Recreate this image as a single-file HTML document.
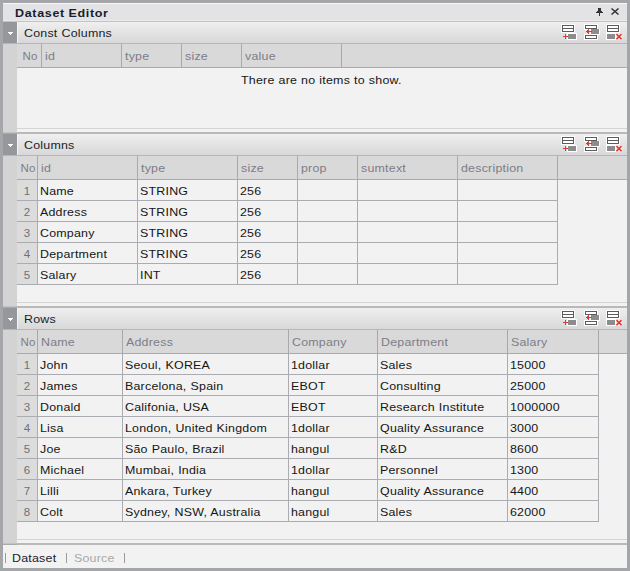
<!DOCTYPE html>
<html><head><meta charset="utf-8"><title>Dataset Editor</title><style>
*{margin:0;padding:0;box-sizing:border-box}
html,body{width:630px;height:571px;overflow:hidden;background:#a4a6a9;font-family:"Liberation Sans", sans-serif;font-size:11.5px}
.a{position:absolute}
.t{position:absolute;white-space:nowrap;line-height:14px;letter-spacing:0.2px;word-spacing:0.3px;transform-origin:0 0;transform:scaleX(1.08)}
.hd{color:#7d7d88}
.dt{color:#161616}
.nm{color:#707078}
</style></head>
<body>
<div class="a" style="left:3px;top:3px;width:624px;height:565px;background:#f2f2f2;"></div><div class="a" style="left:3px;top:3px;width:624px;height:18px;background:#e3e3e5;"></div><div class="a" style="left:3px;top:3px;width:624px;height:1px;background:#f7f7f8;"></div><div class="a" style="left:3px;top:20px;width:624px;height:1px;background:#eaeaec;"></div><div class="a" style="left:3px;top:21px;width:624px;height:1px;background:#c4c4c6;"></div><div class="t dt" style="left:15px;top:6px;font-weight:bold;letter-spacing:0.6px;word-spacing:-0.5px;transform:scaleX(1.09);transform-origin:0 0;color:#1c1c2a">Dataset Editor</div><svg class="a" style="left:594px;top:6px" width="12" height="12" viewBox="0 0 12 12" shape-rendering="crispEdges">
<rect x="4" y="2" width="3" height="4" fill="#333"/>
<rect x="3" y="5" width="5" height="1" fill="#333"/>
<rect x="2" y="6" width="7" height="1" fill="#333"/>
<rect x="5" y="7" width="1" height="3" fill="#333"/>
</svg><svg class="a" style="left:609px;top:6px" width="12" height="12" viewBox="0 0 12 12">
<path d="M2.5 2.5 L9.5 8.5 M9.5 2.5 L2.5 8.5" stroke="#333" stroke-width="1.6" fill="none"/>
</svg><div class="a" style="left:3px;top:22px;width:624px;height:21px;background:linear-gradient(#efefef,#d8d8d8);"></div><div class="a" style="left:3px;top:22px;width:14px;height:21px;background:#95979b;"></div><div class="a" style="left:17px;top:22px;width:1px;height:21px;background:#f4f4f4;"></div><div class="a" style="left:3px;top:43px;width:624px;height:1px;background:#b6b6b8;"></div><svg class="a" style="left:8px;top:32px" width="5" height="3" viewBox="0 0 5 3" shape-rendering="crispEdges">
<rect x="0" y="0" width="5" height="1" fill="#fff"/><rect x="1" y="1" width="3" height="1" fill="#fff"/><rect x="2" y="2" width="1" height="1" fill="#fff"/></svg><div class="t dt" style="left:24px;top:26px;color:#1c1c2a">Const Columns</div><svg class="a" style="left:560px;top:23px" width="66" height="20" viewBox="0 0 66 20" shape-rendering="crispEdges">
<!-- icon1 -->
<rect x="1" y="1" width="14" height="9" fill="#fff" fill-opacity="0.8"/>
<rect x="2" y="2" width="12" height="7" fill="#5c5c5c"/>
<rect x="3" y="3" width="10" height="2" fill="#fff"/>
<rect x="3" y="6" width="10" height="2" fill="#fff"/>
<rect x="7" y="10" width="10" height="7" fill="#fff"/>
<rect x="8" y="11" width="8" height="5" fill="#8c8c8c"/>
<rect x="3" y="13" width="5" height="1" fill="#e53a30"/>
<rect x="5" y="11" width="1" height="5" fill="#e53a30"/>
<!-- icon2 -->
<rect x="24" y="1" width="14" height="6" fill="#fff"/>
<rect x="25" y="2" width="12" height="4" fill="#5c5c5c"/>
<rect x="26" y="3" width="10" height="2" fill="#fff"/>
<rect x="30" y="6" width="10" height="6" fill="#fff"/>
<rect x="31" y="6" width="8" height="5" fill="#8c8c8c"/>
<rect x="26" y="8" width="6" height="1" fill="#e53a30"/>
<rect x="27" y="7" width="1" height="3" fill="#e53a30"/>
<rect x="28" y="6" width="1" height="5" fill="#e53a30"/>
<rect x="24" y="11" width="14" height="6" fill="#fff"/>
<rect x="25" y="12" width="12" height="4" fill="#5c5c5c"/>
<rect x="26" y="13" width="10" height="2" fill="#fff"/>
<!-- icon3 -->
<rect x="46" y="1" width="14" height="9" fill="#fff"/>
<rect x="47" y="2" width="12" height="7" fill="#5c5c5c"/>
<rect x="48" y="3" width="10" height="2" fill="#fff"/>
<rect x="48" y="6" width="10" height="2" fill="#fff"/>
<rect x="46" y="10" width="10" height="7" fill="#fff"/>
<rect x="47" y="11" width="8" height="5" fill="#8c8c8c"/>
</svg>
<svg class="a" style="left:614px;top:33px" width="10" height="8" viewBox="0 0 10 8">
<path d="M2.5 1.2 L7.5 6.2 M7.5 1.2 L2.5 6.2" stroke="#fff" stroke-width="3.2" fill="none"/>
<path d="M2.5 1.2 L7.5 6.2 M7.5 1.2 L2.5 6.2" stroke="#e53a30" stroke-width="1.7" fill="none"/>
</svg><div class="a" style="left:3px;top:44px;width:14px;height:84px;background:#d3d3d3;"></div><div class="a" style="left:17px;top:44px;width:610px;height:23px;background:#d9d9d9;"></div><div class="a" style="left:17px;top:67px;width:610px;height:1px;background:#a8a9ae;"></div><div class="a" style="left:41px;top:44px;width:1px;height:23px;background:#a8a9ae;"></div><div class="t hd" style="left:30.0px;top:49px;transform:translateX(-50%)">No</div><div class="a" style="left:121px;top:44px;width:1px;height:23px;background:#a8a9ae;"></div><div class="t hd" style="left:45px;top:49px;">id</div><div class="a" style="left:181px;top:44px;width:1px;height:23px;background:#a8a9ae;"></div><div class="t hd" style="left:125px;top:49px;">type</div><div class="a" style="left:241px;top:44px;width:1px;height:23px;background:#a8a9ae;"></div><div class="t hd" style="left:185px;top:49px;">size</div><div class="a" style="left:341px;top:44px;width:1px;height:23px;background:#a8a9ae;"></div><div class="t hd" style="left:245px;top:49px;">value</div><div class="t dt" style="left:241px;top:73px;">There are no items to show.</div><div class="a" style="left:3px;top:128px;width:14px;height:4px;background:#d3d3d3;"></div><div class="a" style="left:17px;top:128px;width:610px;height:1px;background:#d4d4d4;"></div><div class="a" style="left:17px;top:129px;width:610px;height:3px;background:#f2f2f2;"></div><div class="a" style="left:17px;top:132px;width:610px;height:2px;background:#b9b9b9;"></div><div class="a" style="left:3px;top:132px;width:14px;height:1px;background:#c2c2c2;"></div><div class="a" style="left:3px;top:133px;width:14px;height:1px;background:#aaaaac;"></div><div class="a" style="left:3px;top:134px;width:624px;height:21px;background:linear-gradient(#efefef,#d8d8d8);"></div><div class="a" style="left:3px;top:134px;width:14px;height:21px;background:#95979b;"></div><div class="a" style="left:17px;top:134px;width:1px;height:21px;background:#f4f4f4;"></div><div class="a" style="left:3px;top:155px;width:624px;height:1px;background:#b6b6b8;"></div><svg class="a" style="left:8px;top:144px" width="5" height="3" viewBox="0 0 5 3" shape-rendering="crispEdges">
<rect x="0" y="0" width="5" height="1" fill="#fff"/><rect x="1" y="1" width="3" height="1" fill="#fff"/><rect x="2" y="2" width="1" height="1" fill="#fff"/></svg><div class="t dt" style="left:24px;top:138px;color:#1c1c2a">Columns</div><svg class="a" style="left:560px;top:135px" width="66" height="20" viewBox="0 0 66 20" shape-rendering="crispEdges">
<!-- icon1 -->
<rect x="1" y="1" width="14" height="9" fill="#fff" fill-opacity="0.8"/>
<rect x="2" y="2" width="12" height="7" fill="#5c5c5c"/>
<rect x="3" y="3" width="10" height="2" fill="#fff"/>
<rect x="3" y="6" width="10" height="2" fill="#fff"/>
<rect x="7" y="10" width="10" height="7" fill="#fff"/>
<rect x="8" y="11" width="8" height="5" fill="#8c8c8c"/>
<rect x="3" y="13" width="5" height="1" fill="#e53a30"/>
<rect x="5" y="11" width="1" height="5" fill="#e53a30"/>
<!-- icon2 -->
<rect x="24" y="1" width="14" height="6" fill="#fff"/>
<rect x="25" y="2" width="12" height="4" fill="#5c5c5c"/>
<rect x="26" y="3" width="10" height="2" fill="#fff"/>
<rect x="30" y="6" width="10" height="6" fill="#fff"/>
<rect x="31" y="6" width="8" height="5" fill="#8c8c8c"/>
<rect x="26" y="8" width="6" height="1" fill="#e53a30"/>
<rect x="27" y="7" width="1" height="3" fill="#e53a30"/>
<rect x="28" y="6" width="1" height="5" fill="#e53a30"/>
<rect x="24" y="11" width="14" height="6" fill="#fff"/>
<rect x="25" y="12" width="12" height="4" fill="#5c5c5c"/>
<rect x="26" y="13" width="10" height="2" fill="#fff"/>
<!-- icon3 -->
<rect x="46" y="1" width="14" height="9" fill="#fff"/>
<rect x="47" y="2" width="12" height="7" fill="#5c5c5c"/>
<rect x="48" y="3" width="10" height="2" fill="#fff"/>
<rect x="48" y="6" width="10" height="2" fill="#fff"/>
<rect x="46" y="10" width="10" height="7" fill="#fff"/>
<rect x="47" y="11" width="8" height="5" fill="#8c8c8c"/>
</svg>
<svg class="a" style="left:614px;top:145px" width="10" height="8" viewBox="0 0 10 8">
<path d="M2.5 1.2 L7.5 6.2 M7.5 1.2 L2.5 6.2" stroke="#fff" stroke-width="3.2" fill="none"/>
<path d="M2.5 1.2 L7.5 6.2 M7.5 1.2 L2.5 6.2" stroke="#e53a30" stroke-width="1.7" fill="none"/>
</svg><div class="a" style="left:3px;top:156px;width:14px;height:146px;background:#d3d3d3;"></div><div class="a" style="left:17px;top:156px;width:610px;height:23px;background:#d9d9d9;"></div><div class="a" style="left:17px;top:179px;width:610px;height:1px;background:#a8a9ae;"></div><div class="a" style="left:37px;top:156px;width:1px;height:23px;background:#a8a9ae;"></div><div class="t hd" style="left:28.0px;top:161px;transform:translateX(-50%)">No</div><div class="a" style="left:137px;top:156px;width:1px;height:23px;background:#a8a9ae;"></div><div class="t hd" style="left:41px;top:161px;">id</div><div class="a" style="left:237px;top:156px;width:1px;height:23px;background:#a8a9ae;"></div><div class="t hd" style="left:141px;top:161px;">type</div><div class="a" style="left:297px;top:156px;width:1px;height:23px;background:#a8a9ae;"></div><div class="t hd" style="left:241px;top:161px;">size</div><div class="a" style="left:357px;top:156px;width:1px;height:23px;background:#a8a9ae;"></div><div class="t hd" style="left:301px;top:161px;">prop</div><div class="a" style="left:457px;top:156px;width:1px;height:23px;background:#a8a9ae;"></div><div class="t hd" style="left:361px;top:161px;">sumtext</div><div class="a" style="left:557px;top:156px;width:1px;height:23px;background:#a8a9ae;"></div><div class="t hd" style="left:461px;top:161px;">description</div><div class="a" style="left:17px;top:180px;width:20px;height:20px;background:#dcdcdc;"></div><div class="a" style="left:38px;top:180px;width:519px;height:20px;background:#f2f2f2;"></div><div class="a" style="left:17px;top:200px;width:541px;height:1px;background:#abacb1;"></div><div class="a" style="left:37px;top:180px;width:1px;height:20px;background:#abacb1;"></div><div class="a" style="left:137px;top:180px;width:1px;height:20px;background:#abacb1;"></div><div class="a" style="left:237px;top:180px;width:1px;height:20px;background:#abacb1;"></div><div class="a" style="left:297px;top:180px;width:1px;height:20px;background:#abacb1;"></div><div class="a" style="left:357px;top:180px;width:1px;height:20px;background:#abacb1;"></div><div class="a" style="left:457px;top:180px;width:1px;height:20px;background:#abacb1;"></div><div class="a" style="left:557px;top:180px;width:1px;height:20px;background:#abacb1;"></div><div class="t nm" style="left:27.0px;top:184px;transform:translateX(-50%)">1</div><div class="t dt" style="left:40px;top:184px;">Name</div><div class="t dt" style="left:140px;top:184px;">STRING</div><div class="t dt" style="left:240px;top:184px;">256</div><div class="t dt" style="left:300px;top:184px;"></div><div class="t dt" style="left:360px;top:184px;"></div><div class="t dt" style="left:460px;top:184px;"></div><div class="a" style="left:17px;top:201px;width:20px;height:20px;background:#dcdcdc;"></div><div class="a" style="left:38px;top:201px;width:519px;height:20px;background:#f2f2f2;"></div><div class="a" style="left:17px;top:221px;width:541px;height:1px;background:#abacb1;"></div><div class="a" style="left:37px;top:201px;width:1px;height:20px;background:#abacb1;"></div><div class="a" style="left:137px;top:201px;width:1px;height:20px;background:#abacb1;"></div><div class="a" style="left:237px;top:201px;width:1px;height:20px;background:#abacb1;"></div><div class="a" style="left:297px;top:201px;width:1px;height:20px;background:#abacb1;"></div><div class="a" style="left:357px;top:201px;width:1px;height:20px;background:#abacb1;"></div><div class="a" style="left:457px;top:201px;width:1px;height:20px;background:#abacb1;"></div><div class="a" style="left:557px;top:201px;width:1px;height:20px;background:#abacb1;"></div><div class="t nm" style="left:27.0px;top:205px;transform:translateX(-50%)">2</div><div class="t dt" style="left:40px;top:205px;">Address</div><div class="t dt" style="left:140px;top:205px;">STRING</div><div class="t dt" style="left:240px;top:205px;">256</div><div class="t dt" style="left:300px;top:205px;"></div><div class="t dt" style="left:360px;top:205px;"></div><div class="t dt" style="left:460px;top:205px;"></div><div class="a" style="left:17px;top:222px;width:20px;height:20px;background:#dcdcdc;"></div><div class="a" style="left:38px;top:222px;width:519px;height:20px;background:#f2f2f2;"></div><div class="a" style="left:17px;top:242px;width:541px;height:1px;background:#abacb1;"></div><div class="a" style="left:37px;top:222px;width:1px;height:20px;background:#abacb1;"></div><div class="a" style="left:137px;top:222px;width:1px;height:20px;background:#abacb1;"></div><div class="a" style="left:237px;top:222px;width:1px;height:20px;background:#abacb1;"></div><div class="a" style="left:297px;top:222px;width:1px;height:20px;background:#abacb1;"></div><div class="a" style="left:357px;top:222px;width:1px;height:20px;background:#abacb1;"></div><div class="a" style="left:457px;top:222px;width:1px;height:20px;background:#abacb1;"></div><div class="a" style="left:557px;top:222px;width:1px;height:20px;background:#abacb1;"></div><div class="t nm" style="left:27.0px;top:226px;transform:translateX(-50%)">3</div><div class="t dt" style="left:40px;top:226px;">Company</div><div class="t dt" style="left:140px;top:226px;">STRING</div><div class="t dt" style="left:240px;top:226px;">256</div><div class="t dt" style="left:300px;top:226px;"></div><div class="t dt" style="left:360px;top:226px;"></div><div class="t dt" style="left:460px;top:226px;"></div><div class="a" style="left:17px;top:243px;width:20px;height:20px;background:#dcdcdc;"></div><div class="a" style="left:38px;top:243px;width:519px;height:20px;background:#f2f2f2;"></div><div class="a" style="left:17px;top:263px;width:541px;height:1px;background:#abacb1;"></div><div class="a" style="left:37px;top:243px;width:1px;height:20px;background:#abacb1;"></div><div class="a" style="left:137px;top:243px;width:1px;height:20px;background:#abacb1;"></div><div class="a" style="left:237px;top:243px;width:1px;height:20px;background:#abacb1;"></div><div class="a" style="left:297px;top:243px;width:1px;height:20px;background:#abacb1;"></div><div class="a" style="left:357px;top:243px;width:1px;height:20px;background:#abacb1;"></div><div class="a" style="left:457px;top:243px;width:1px;height:20px;background:#abacb1;"></div><div class="a" style="left:557px;top:243px;width:1px;height:20px;background:#abacb1;"></div><div class="t nm" style="left:27.0px;top:247px;transform:translateX(-50%)">4</div><div class="t dt" style="left:40px;top:247px;">Department</div><div class="t dt" style="left:140px;top:247px;">STRING</div><div class="t dt" style="left:240px;top:247px;">256</div><div class="t dt" style="left:300px;top:247px;"></div><div class="t dt" style="left:360px;top:247px;"></div><div class="t dt" style="left:460px;top:247px;"></div><div class="a" style="left:17px;top:264px;width:20px;height:20px;background:#dcdcdc;"></div><div class="a" style="left:38px;top:264px;width:519px;height:20px;background:#f2f2f2;"></div><div class="a" style="left:17px;top:284px;width:541px;height:1px;background:#abacb1;"></div><div class="a" style="left:37px;top:264px;width:1px;height:20px;background:#abacb1;"></div><div class="a" style="left:137px;top:264px;width:1px;height:20px;background:#abacb1;"></div><div class="a" style="left:237px;top:264px;width:1px;height:20px;background:#abacb1;"></div><div class="a" style="left:297px;top:264px;width:1px;height:20px;background:#abacb1;"></div><div class="a" style="left:357px;top:264px;width:1px;height:20px;background:#abacb1;"></div><div class="a" style="left:457px;top:264px;width:1px;height:20px;background:#abacb1;"></div><div class="a" style="left:557px;top:264px;width:1px;height:20px;background:#abacb1;"></div><div class="t nm" style="left:27.0px;top:268px;transform:translateX(-50%)">5</div><div class="t dt" style="left:40px;top:268px;">Salary</div><div class="t dt" style="left:140px;top:268px;">INT</div><div class="t dt" style="left:240px;top:268px;">256</div><div class="t dt" style="left:300px;top:268px;"></div><div class="t dt" style="left:360px;top:268px;"></div><div class="t dt" style="left:460px;top:268px;"></div><div class="a" style="left:3px;top:302px;width:14px;height:4px;background:#d3d3d3;"></div><div class="a" style="left:17px;top:302px;width:610px;height:1px;background:#d4d4d4;"></div><div class="a" style="left:17px;top:303px;width:610px;height:3px;background:#f2f2f2;"></div><div class="a" style="left:17px;top:306px;width:610px;height:2px;background:#b9b9b9;"></div><div class="a" style="left:3px;top:306px;width:14px;height:1px;background:#c2c2c2;"></div><div class="a" style="left:3px;top:307px;width:14px;height:1px;background:#aaaaac;"></div><div class="a" style="left:3px;top:308px;width:624px;height:21px;background:linear-gradient(#efefef,#d8d8d8);"></div><div class="a" style="left:3px;top:308px;width:14px;height:21px;background:#95979b;"></div><div class="a" style="left:17px;top:308px;width:1px;height:21px;background:#f4f4f4;"></div><div class="a" style="left:3px;top:329px;width:624px;height:1px;background:#b6b6b8;"></div><svg class="a" style="left:8px;top:318px" width="5" height="3" viewBox="0 0 5 3" shape-rendering="crispEdges">
<rect x="0" y="0" width="5" height="1" fill="#fff"/><rect x="1" y="1" width="3" height="1" fill="#fff"/><rect x="2" y="2" width="1" height="1" fill="#fff"/></svg><div class="t dt" style="left:24px;top:312px;color:#1c1c2a">Rows</div><svg class="a" style="left:560px;top:309px" width="66" height="20" viewBox="0 0 66 20" shape-rendering="crispEdges">
<!-- icon1 -->
<rect x="1" y="1" width="14" height="9" fill="#fff" fill-opacity="0.8"/>
<rect x="2" y="2" width="12" height="7" fill="#5c5c5c"/>
<rect x="3" y="3" width="10" height="2" fill="#fff"/>
<rect x="3" y="6" width="10" height="2" fill="#fff"/>
<rect x="7" y="10" width="10" height="7" fill="#fff"/>
<rect x="8" y="11" width="8" height="5" fill="#8c8c8c"/>
<rect x="3" y="13" width="5" height="1" fill="#e53a30"/>
<rect x="5" y="11" width="1" height="5" fill="#e53a30"/>
<!-- icon2 -->
<rect x="24" y="1" width="14" height="6" fill="#fff"/>
<rect x="25" y="2" width="12" height="4" fill="#5c5c5c"/>
<rect x="26" y="3" width="10" height="2" fill="#fff"/>
<rect x="30" y="6" width="10" height="6" fill="#fff"/>
<rect x="31" y="6" width="8" height="5" fill="#8c8c8c"/>
<rect x="26" y="8" width="6" height="1" fill="#e53a30"/>
<rect x="27" y="7" width="1" height="3" fill="#e53a30"/>
<rect x="28" y="6" width="1" height="5" fill="#e53a30"/>
<rect x="24" y="11" width="14" height="6" fill="#fff"/>
<rect x="25" y="12" width="12" height="4" fill="#5c5c5c"/>
<rect x="26" y="13" width="10" height="2" fill="#fff"/>
<!-- icon3 -->
<rect x="46" y="1" width="14" height="9" fill="#fff"/>
<rect x="47" y="2" width="12" height="7" fill="#5c5c5c"/>
<rect x="48" y="3" width="10" height="2" fill="#fff"/>
<rect x="48" y="6" width="10" height="2" fill="#fff"/>
<rect x="46" y="10" width="10" height="7" fill="#fff"/>
<rect x="47" y="11" width="8" height="5" fill="#8c8c8c"/>
</svg>
<svg class="a" style="left:614px;top:319px" width="10" height="8" viewBox="0 0 10 8">
<path d="M2.5 1.2 L7.5 6.2 M7.5 1.2 L2.5 6.2" stroke="#fff" stroke-width="3.2" fill="none"/>
<path d="M2.5 1.2 L7.5 6.2 M7.5 1.2 L2.5 6.2" stroke="#e53a30" stroke-width="1.7" fill="none"/>
</svg><div class="a" style="left:3px;top:330px;width:14px;height:209px;background:#d3d3d3;"></div><div class="a" style="left:17px;top:330px;width:610px;height:23px;background:#d9d9d9;"></div><div class="a" style="left:17px;top:353px;width:610px;height:1px;background:#a8a9ae;"></div><div class="a" style="left:37px;top:330px;width:1px;height:23px;background:#a8a9ae;"></div><div class="t hd" style="left:28.0px;top:335px;transform:translateX(-50%)">No</div><div class="a" style="left:122px;top:330px;width:1px;height:23px;background:#a8a9ae;"></div><div class="t hd" style="left:41px;top:335px;">Name</div><div class="a" style="left:288px;top:330px;width:1px;height:23px;background:#a8a9ae;"></div><div class="t hd" style="left:126px;top:335px;">Address</div><div class="a" style="left:377px;top:330px;width:1px;height:23px;background:#a8a9ae;"></div><div class="t hd" style="left:292px;top:335px;">Company</div><div class="a" style="left:507px;top:330px;width:1px;height:23px;background:#a8a9ae;"></div><div class="t hd" style="left:381px;top:335px;">Department</div><div class="a" style="left:598px;top:330px;width:1px;height:23px;background:#a8a9ae;"></div><div class="t hd" style="left:511px;top:335px;">Salary</div><div class="a" style="left:17px;top:354px;width:20px;height:20px;background:#dcdcdc;"></div><div class="a" style="left:38px;top:354px;width:560px;height:20px;background:#f2f2f2;"></div><div class="a" style="left:17px;top:374px;width:582px;height:1px;background:#abacb1;"></div><div class="a" style="left:37px;top:354px;width:1px;height:20px;background:#abacb1;"></div><div class="a" style="left:122px;top:354px;width:1px;height:20px;background:#abacb1;"></div><div class="a" style="left:288px;top:354px;width:1px;height:20px;background:#abacb1;"></div><div class="a" style="left:377px;top:354px;width:1px;height:20px;background:#abacb1;"></div><div class="a" style="left:507px;top:354px;width:1px;height:20px;background:#abacb1;"></div><div class="a" style="left:598px;top:354px;width:1px;height:20px;background:#abacb1;"></div><div class="t nm" style="left:27.0px;top:358px;transform:translateX(-50%)">1</div><div class="t dt" style="left:40px;top:358px;">John</div><div class="t dt" style="left:125px;top:358px;">Seoul, KOREA</div><div class="t dt" style="left:291px;top:358px;">1dollar</div><div class="t dt" style="left:380px;top:358px;">Sales</div><div class="t dt" style="left:510px;top:358px;">15000</div><div class="a" style="left:17px;top:375px;width:20px;height:20px;background:#dcdcdc;"></div><div class="a" style="left:38px;top:375px;width:560px;height:20px;background:#f2f2f2;"></div><div class="a" style="left:17px;top:395px;width:582px;height:1px;background:#abacb1;"></div><div class="a" style="left:37px;top:375px;width:1px;height:20px;background:#abacb1;"></div><div class="a" style="left:122px;top:375px;width:1px;height:20px;background:#abacb1;"></div><div class="a" style="left:288px;top:375px;width:1px;height:20px;background:#abacb1;"></div><div class="a" style="left:377px;top:375px;width:1px;height:20px;background:#abacb1;"></div><div class="a" style="left:507px;top:375px;width:1px;height:20px;background:#abacb1;"></div><div class="a" style="left:598px;top:375px;width:1px;height:20px;background:#abacb1;"></div><div class="t nm" style="left:27.0px;top:379px;transform:translateX(-50%)">2</div><div class="t dt" style="left:40px;top:379px;">James</div><div class="t dt" style="left:125px;top:379px;">Barcelona, Spain</div><div class="t dt" style="left:291px;top:379px;">EBOT</div><div class="t dt" style="left:380px;top:379px;">Consulting</div><div class="t dt" style="left:510px;top:379px;">25000</div><div class="a" style="left:17px;top:396px;width:20px;height:20px;background:#dcdcdc;"></div><div class="a" style="left:38px;top:396px;width:560px;height:20px;background:#f2f2f2;"></div><div class="a" style="left:17px;top:416px;width:582px;height:1px;background:#abacb1;"></div><div class="a" style="left:37px;top:396px;width:1px;height:20px;background:#abacb1;"></div><div class="a" style="left:122px;top:396px;width:1px;height:20px;background:#abacb1;"></div><div class="a" style="left:288px;top:396px;width:1px;height:20px;background:#abacb1;"></div><div class="a" style="left:377px;top:396px;width:1px;height:20px;background:#abacb1;"></div><div class="a" style="left:507px;top:396px;width:1px;height:20px;background:#abacb1;"></div><div class="a" style="left:598px;top:396px;width:1px;height:20px;background:#abacb1;"></div><div class="t nm" style="left:27.0px;top:400px;transform:translateX(-50%)">3</div><div class="t dt" style="left:40px;top:400px;">Donald</div><div class="t dt" style="left:125px;top:400px;">Califonia, USA</div><div class="t dt" style="left:291px;top:400px;">EBOT</div><div class="t dt" style="left:380px;top:400px;">Research Institute</div><div class="t dt" style="left:510px;top:400px;">1000000</div><div class="a" style="left:17px;top:417px;width:20px;height:20px;background:#dcdcdc;"></div><div class="a" style="left:38px;top:417px;width:560px;height:20px;background:#f2f2f2;"></div><div class="a" style="left:17px;top:437px;width:582px;height:1px;background:#abacb1;"></div><div class="a" style="left:37px;top:417px;width:1px;height:20px;background:#abacb1;"></div><div class="a" style="left:122px;top:417px;width:1px;height:20px;background:#abacb1;"></div><div class="a" style="left:288px;top:417px;width:1px;height:20px;background:#abacb1;"></div><div class="a" style="left:377px;top:417px;width:1px;height:20px;background:#abacb1;"></div><div class="a" style="left:507px;top:417px;width:1px;height:20px;background:#abacb1;"></div><div class="a" style="left:598px;top:417px;width:1px;height:20px;background:#abacb1;"></div><div class="t nm" style="left:27.0px;top:421px;transform:translateX(-50%)">4</div><div class="t dt" style="left:40px;top:421px;">Lisa</div><div class="t dt" style="left:125px;top:421px;">London, United Kingdom</div><div class="t dt" style="left:291px;top:421px;">1dollar</div><div class="t dt" style="left:380px;top:421px;">Quality Assurance</div><div class="t dt" style="left:510px;top:421px;">3000</div><div class="a" style="left:17px;top:438px;width:20px;height:20px;background:#dcdcdc;"></div><div class="a" style="left:38px;top:438px;width:560px;height:20px;background:#f2f2f2;"></div><div class="a" style="left:17px;top:458px;width:582px;height:1px;background:#abacb1;"></div><div class="a" style="left:37px;top:438px;width:1px;height:20px;background:#abacb1;"></div><div class="a" style="left:122px;top:438px;width:1px;height:20px;background:#abacb1;"></div><div class="a" style="left:288px;top:438px;width:1px;height:20px;background:#abacb1;"></div><div class="a" style="left:377px;top:438px;width:1px;height:20px;background:#abacb1;"></div><div class="a" style="left:507px;top:438px;width:1px;height:20px;background:#abacb1;"></div><div class="a" style="left:598px;top:438px;width:1px;height:20px;background:#abacb1;"></div><div class="t nm" style="left:27.0px;top:442px;transform:translateX(-50%)">5</div><div class="t dt" style="left:40px;top:442px;">Joe</div><div class="t dt" style="left:125px;top:442px;">São Paulo, Brazil</div><div class="t dt" style="left:291px;top:442px;">hangul</div><div class="t dt" style="left:380px;top:442px;">R&amp;D</div><div class="t dt" style="left:510px;top:442px;">8600</div><div class="a" style="left:17px;top:459px;width:20px;height:20px;background:#dcdcdc;"></div><div class="a" style="left:38px;top:459px;width:560px;height:20px;background:#f2f2f2;"></div><div class="a" style="left:17px;top:479px;width:582px;height:1px;background:#abacb1;"></div><div class="a" style="left:37px;top:459px;width:1px;height:20px;background:#abacb1;"></div><div class="a" style="left:122px;top:459px;width:1px;height:20px;background:#abacb1;"></div><div class="a" style="left:288px;top:459px;width:1px;height:20px;background:#abacb1;"></div><div class="a" style="left:377px;top:459px;width:1px;height:20px;background:#abacb1;"></div><div class="a" style="left:507px;top:459px;width:1px;height:20px;background:#abacb1;"></div><div class="a" style="left:598px;top:459px;width:1px;height:20px;background:#abacb1;"></div><div class="t nm" style="left:27.0px;top:463px;transform:translateX(-50%)">6</div><div class="t dt" style="left:40px;top:463px;">Michael</div><div class="t dt" style="left:125px;top:463px;">Mumbai, India</div><div class="t dt" style="left:291px;top:463px;">1dollar</div><div class="t dt" style="left:380px;top:463px;">Personnel</div><div class="t dt" style="left:510px;top:463px;">1300</div><div class="a" style="left:17px;top:480px;width:20px;height:20px;background:#dcdcdc;"></div><div class="a" style="left:38px;top:480px;width:560px;height:20px;background:#f2f2f2;"></div><div class="a" style="left:17px;top:500px;width:582px;height:1px;background:#abacb1;"></div><div class="a" style="left:37px;top:480px;width:1px;height:20px;background:#abacb1;"></div><div class="a" style="left:122px;top:480px;width:1px;height:20px;background:#abacb1;"></div><div class="a" style="left:288px;top:480px;width:1px;height:20px;background:#abacb1;"></div><div class="a" style="left:377px;top:480px;width:1px;height:20px;background:#abacb1;"></div><div class="a" style="left:507px;top:480px;width:1px;height:20px;background:#abacb1;"></div><div class="a" style="left:598px;top:480px;width:1px;height:20px;background:#abacb1;"></div><div class="t nm" style="left:27.0px;top:484px;transform:translateX(-50%)">7</div><div class="t dt" style="left:40px;top:484px;">Lilli</div><div class="t dt" style="left:125px;top:484px;">Ankara, Turkey</div><div class="t dt" style="left:291px;top:484px;">hangul</div><div class="t dt" style="left:380px;top:484px;">Quality Assurance</div><div class="t dt" style="left:510px;top:484px;">4400</div><div class="a" style="left:17px;top:501px;width:20px;height:20px;background:#dcdcdc;"></div><div class="a" style="left:38px;top:501px;width:560px;height:20px;background:#f2f2f2;"></div><div class="a" style="left:17px;top:521px;width:582px;height:1px;background:#abacb1;"></div><div class="a" style="left:37px;top:501px;width:1px;height:20px;background:#abacb1;"></div><div class="a" style="left:122px;top:501px;width:1px;height:20px;background:#abacb1;"></div><div class="a" style="left:288px;top:501px;width:1px;height:20px;background:#abacb1;"></div><div class="a" style="left:377px;top:501px;width:1px;height:20px;background:#abacb1;"></div><div class="a" style="left:507px;top:501px;width:1px;height:20px;background:#abacb1;"></div><div class="a" style="left:598px;top:501px;width:1px;height:20px;background:#abacb1;"></div><div class="t nm" style="left:27.0px;top:505px;transform:translateX(-50%)">8</div><div class="t dt" style="left:40px;top:505px;">Colt</div><div class="t dt" style="left:125px;top:505px;">Sydney, NSW, Australia</div><div class="t dt" style="left:291px;top:505px;">hangul</div><div class="t dt" style="left:380px;top:505px;">Sales</div><div class="t dt" style="left:510px;top:505px;">62000</div><div class="a" style="left:3px;top:539px;width:14px;height:4px;background:#d3d3d3;"></div><div class="a" style="left:17px;top:539px;width:610px;height:1px;background:#d4d4d4;"></div><div class="a" style="left:17px;top:540px;width:610px;height:3px;background:#f2f2f2;"></div><div class="a" style="left:17px;top:543px;width:610px;height:2px;background:#b9b9b9;"></div><div class="a" style="left:3px;top:543px;width:14px;height:1px;background:#c2c2c2;"></div><div class="a" style="left:3px;top:544px;width:14px;height:1px;background:#aaaaac;"></div><div class="a" style="left:3px;top:545px;width:624px;height:23px;background:#f2f2f2;"></div><div class="a" style="left:5px;top:553px;width:1px;height:10px;background:#9a9a9a;"></div><div class="a" style="left:66px;top:553px;width:1px;height:10px;background:#9a9a9a;"></div><div class="a" style="left:124px;top:553px;width:1px;height:10px;background:#9a9a9a;"></div><div class="t dt" style="left:12px;top:551px;color:#1c1c2a">Dataset</div><div class="t dt" style="left:74px;top:551px;color:#a8a8a8">Source</div>
</body></html>
